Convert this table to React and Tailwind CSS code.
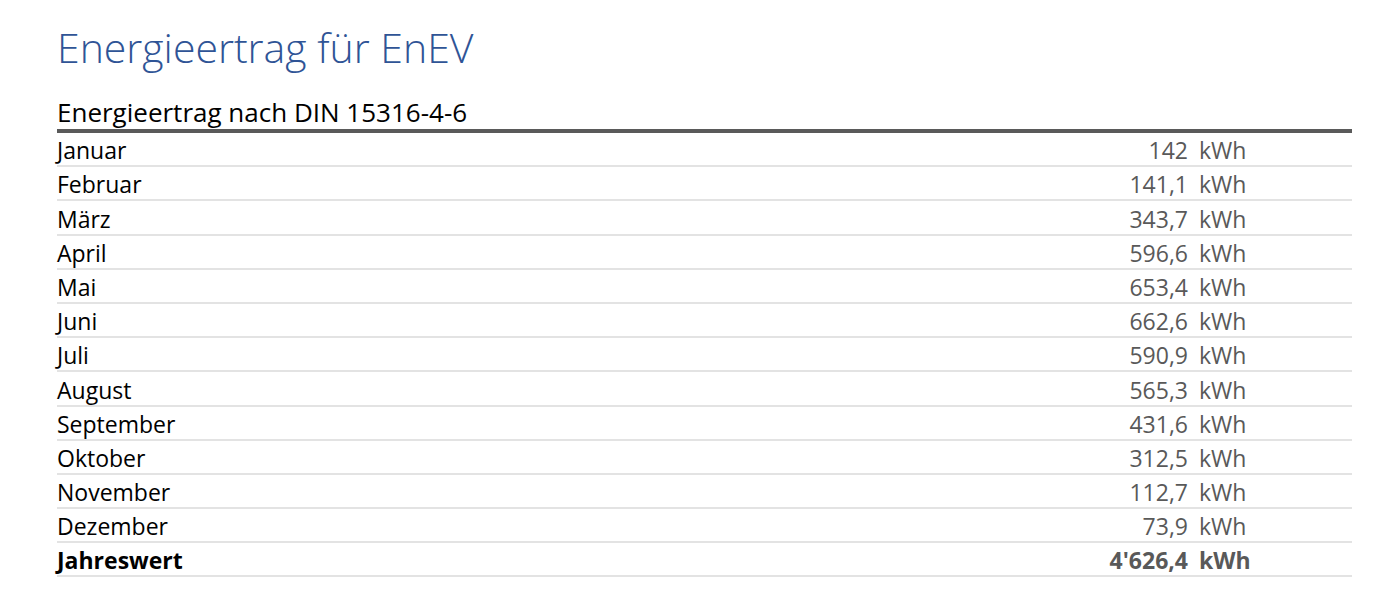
import React from "react";

const rows = [
  ["Januar", "142"],
  ["Februar", "141,1"],
  ["März", "343,7"],
  ["April", "596,6"],
  ["Mai", "653,4"],
  ["Juni", "662,6"],
  ["Juli", "590,9"],
  ["August", "565,3"],
  ["September", "431,6"],
  ["Oktober", "312,5"],
  ["November", "112,7"],
  ["Dezember", "73,9"],
];

function Row({ label, value, bold }) {
  return (
    <div className={`flex items-end h-[34.2px] border-b-2 border-[#e3e3e3] pb-[2px] ${bold ? "font-bold" : ""}`}>
      <div className="flex-1 text-black">{label}</div>
      <div className="text-right text-[#595959]">{value}</div>
      <div className="w-[164px] pl-[11px] text-[#595959]">kWh</div>
    </div>
  );
}

export default function App() {
  return (
    <div className="w-[1394px] h-[594px] bg-white pl-[57px] pr-[42px]" style={{ fontFamily: '"Open Sans", "Liberation Sans", sans-serif' }}>
      <h1 className="pt-[21px] text-[41px] font-light leading-[52px] text-[#2f5496]">Energieertrag für EnEV</h1>
      <div className="mt-[24px] text-[26px] leading-[30px] text-black">Energieertrag nach DIN 15316-4-6</div>
      <div className="h-[4px] bg-[#5a5a5a] mt-[2px]" />
      <div className="text-[23px] leading-[26px]">
        {rows.map(([l, v]) => (
          <Row key={l} label={l} value={v} />
        ))}
        <Row label="Jahreswert" value="4'626,4" bold />
      </div>
    </div>
  );
}
